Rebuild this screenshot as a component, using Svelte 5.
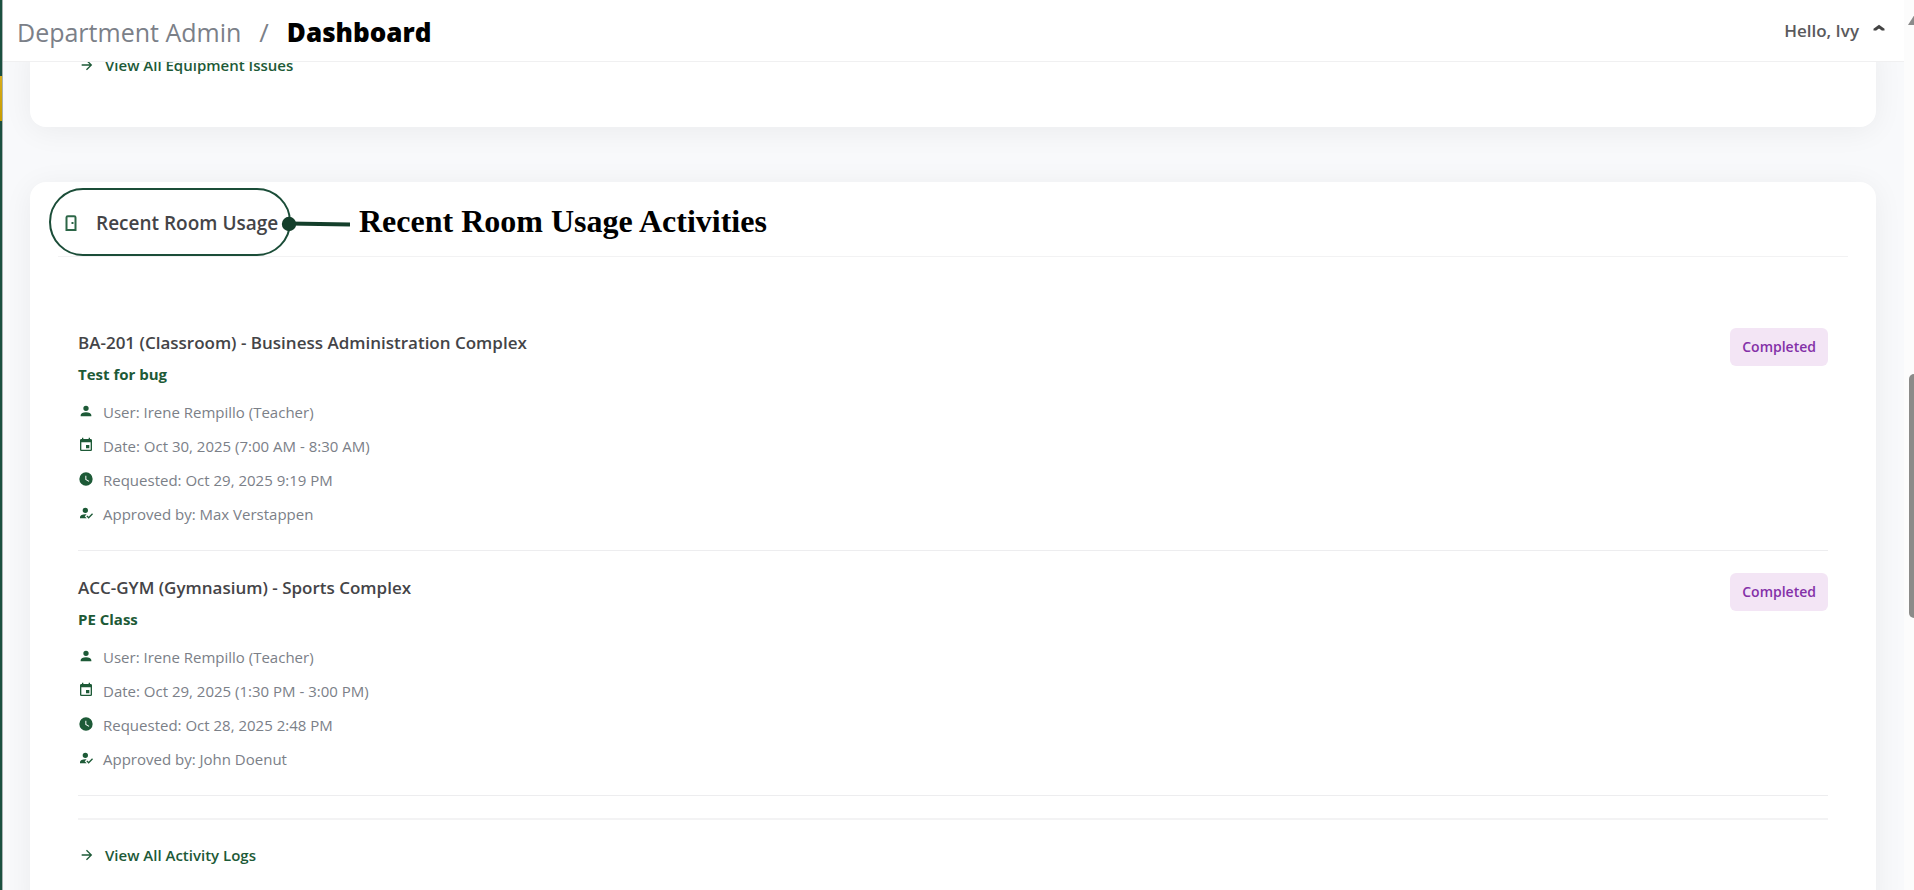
<script>
  const icons = {
    user: 'M12,4A4,4 0 0,1 16,8A4,4 0 0,1 12,12A4,4 0 0,1 8,8A4,4 0 0,1 12,4M12,14C16.42,14 20,15.79 20,18V20H4V18C4,15.79 7.58,14 12,14Z',
    date: 'M19,19H5V8H19M16,1V3H8V1H6V3H5C3.89,3 3,3.89 3,5V19A2,2 0 0,0 5,21H19A2,2 0 0,0 21,19V5C21,3.89 20.1,3 19,3H18V1M17,12H12V17H17V12Z',
    clock: 'M12,2A10,10 0 0,0 2,12A10,10 0 0,0 12,22A10,10 0 0,0 22,12A10,10 0 0,0 12,2M16.2,16.2L11,13V7H12.5V12.2L17,14.9L16.2,16.2Z',
    check: 'M21.1,12.5L22.5,13.91L15.97,20.5L12.5,17L13.9,15.59L15.97,17.67L21.1,12.5M10,17L13,20H3V18C3,15.79 6.58,14 11,14L12.89,14.11L10,17M11,4A4,4 0 0,1 15,8A4,4 0 0,1 11,12A4,4 0 0,1 7,8A4,4 0 0,1 11,4Z'
  };

  const activities = [
    {
      room: 'BA-201 (Classroom) - Business Administration Complex',
      purpose: 'Test for bug',
      status: 'Completed',
      details: [
        ['user', 'User: Irene Rempillo (Teacher)'],
        ['date', 'Date: Oct 30, 2025 (7:00 AM - 8:30 AM)'],
        ['clock', 'Requested: Oct 29, 2025 9:19 PM'],
        ['check', 'Approved by: Max Verstappen']
      ]
    },
    {
      room: 'ACC-GYM (Gymnasium) - Sports Complex',
      purpose: 'PE Class',
      status: 'Completed',
      details: [
        ['user', 'User: Irene Rempillo (Teacher)'],
        ['date', 'Date: Oct 29, 2025 (1:30 PM - 3:00 PM)'],
        ['clock', 'Requested: Oct 28, 2025 2:48 PM'],
        ['check', 'Approved by: John Doenut']
      ]
    }
  ];
</script>

{#snippet arrow()}
  <svg class="icon" viewBox="0 0 24 24" aria-hidden="true">
    <path d="M4,11V13H16L10.5,18.5L11.92,19.92L19.84,12L11.92,4.08L10.5,5.5L16,11H4Z" />
  </svg>
{/snippet}

<div class="shell">
  <aside class="sidebar"><span class="active"></span></aside>

  <div class="page">
    <header class="topbar">
      <nav class="crumbs" aria-label="Breadcrumb">
        <a href="#admin">Department Admin</a>
        <span class="slash">/</span>
        <strong>Dashboard</strong>
      </nav>
      <button class="account" type="button">
        Hello, Ivy
        <svg viewBox="0 0 12 8" aria-hidden="true"><path d="M2 6.5 L2 5.5 L6 2.5 L10 5.5 V6.5" /></svg>
      </button>
    </header>

    <main class="content">
      <section class="card issues">
        <a class="more" href="#issues">{@render arrow()}View All Equipment Issues</a>
      </section>

      <section class="card usage">
        <div class="card-head">
          <svg class="door" viewBox="0 0 12 16" aria-hidden="true">
            <path d="M1.5 15 V2.5 Q1.5 1.2 2.8 1.2 H9.2 Q10.5 1.2 10.5 2.5 V15 Z" />
            <path d="M6.5 8 H8.5" />
          </svg>
          <h2>Recent Room Usage</h2>
          <div class="callout">
            <span class="ring"></span>
            <svg class="leader" viewBox="0 0 70 16" aria-hidden="true">
              <path d="M8 7.5 L69 8.5" />
              <circle cx="8" cy="8" r="7.2" />
            </svg>
            <span class="label">Recent Room Usage Activities</span>
          </div>
        </div>

        <div class="card-body">
          {#each activities as item}
            <article class="item">
              <div>
                <h3>{item.room}</h3>
                <p class="purpose">{item.purpose}</p>
                <ul>
                  {#each item.details as [icon, text]}
                    <li>
                      <svg class="icon" viewBox="0 0 24 24" aria-hidden="true"><path d={icons[icon]} /></svg>
                      <span>{text}</span>
                    </li>
                  {/each}
                </ul>
              </div>
              <span class="badge">{item.status}</span>
            </article>
          {/each}
          <div class="footer">
            <a class="more" href="#logs">{@render arrow()}View All Activity Logs</a>
          </div>
        </div>
      </section>
    </main>
  </div>

  <div class="scroll" aria-hidden="true">
    <span class="up"></span>
    <span class="thumb"></span>
  </div>
</div>

<style>
  :global(body) {
    margin: 0;
    overflow: hidden;
  }

  .shell {
    display: flex;
    height: 100vh;
    overflow: hidden;
    background: #f8f9fb;
    color: #444447;
    font-family: 'Open Sans', 'Noto Sans', sans-serif;
  }

  h2, h3, p, ul {
    margin: 0;
    padding: 0;
  }

  .sidebar {
    flex: none;
    box-sizing: border-box;
    width: 3px;
    padding-top: 76px;
    background: #1b5040;
    border-right: 1px solid #a9b3b2;
  }

  .active {
    display: block;
    height: 45px;
    background: linear-gradient(#d9ad1c, #c79c00);
  }

  .page {
    flex: 1;
    min-width: 0;
  }

  .topbar {
    position: relative;
    z-index: 1;
    display: flex;
    align-items: center;
    justify-content: space-between;
    box-sizing: border-box;
    height: 62px;
    padding: 0 19px 0 14px;
    background: #fff;
    border-bottom: 1px solid #f0f0f1;
  }

  .crumbs {
    display: flex;
    align-items: center;
    font-size: 26px;
    line-height: 36px;
    padding-top: 2px;
  }

  .crumbs a {
    font-size: 25px;
    color: #7b8088;
    text-decoration: none;
  }

  .slash {
    margin: 0 18px;
    color: #7b8088;
  }

  .crumbs strong {
    font-weight: 800;
    color: #000;
  }

  .account {
    display: flex;
    align-items: center;
    gap: 14px;
    padding: 0;
    border: 0;
    background: none;
    color: #5a5a5d;
    font: 600 16px/24px 'Open Sans', 'Noto Sans', sans-serif;
    font-size: 17px;
  }

  .account svg {
    width: 12px;
    height: 8px;
    margin-bottom: 6px;
    fill: none;
    stroke: #444;
    stroke-width: 3;
  }

  .content {
    padding: 0 28px 0 27px;
  }

  .card {
    background: #fff;
    border-radius: 16px;
    box-shadow: 0 4px 30px rgba(0, 0, 0, 0.06);
  }

  .issues {
    display: flex;
    margin-top: -22px;
    padding: 10px 49px 47px;
  }

  .usage {
    margin-top: 55px;
    padding: 0 28px 48px;
  }

  .card-head {
    position: relative;
    display: flex;
    align-items: center;
    gap: 19px;
    height: 74px;
    padding: 0 7px;
    border-bottom: 1px solid #f2f2f3;
  }

  .door {
    width: 12px;
    height: 16px;
    margin-top: 8px;
    fill: none;
    stroke: #2c6647;
    stroke-width: 2;
  }

  h2 {
    padding-top: 8px;
    font-size: 19px;
    line-height: 26px;
    font-weight: 600;
  }

  .callout {
    position: absolute;
    inset: 5px auto auto -9px;
    display: flex;
    align-items: center;
    height: 70px;
  }

  .ring {
    box-sizing: border-box;
    width: 242px;
    height: 68px;
    border: 2px solid #1b4d38;
    border-radius: 35px;
  }

  .leader {
    width: 70px;
    height: 16px;
    margin: 3px 0 0 -10px;
    fill: #143f2b;
    stroke: #143f2b;
  }

  .leader path {
    stroke-width: 4;
  }

  .leader circle {
    stroke: none;
  }

  .label {
    margin-left: 8px;
    padding-bottom: 2px;
    font: bold 32px/36px 'Liberation Serif', serif;
    color: #000;
    white-space: nowrap;
  }

  .card-body {
    padding: 49px 20px 0;
  }

  .item {
    display: flex;
    align-items: flex-start;
    justify-content: space-between;
    padding: 22px 0 19px;
    border-bottom: 1px solid #ededef;
  }

  h3 {
    font-size: 17px;
    line-height: 30px;
    font-weight: 600;
  }

  .purpose {
    margin-bottom: 5px;
    font-size: 15px;
    line-height: 32px;
    font-weight: 700;
    color: #1d5a37;
  }

  ul {
    list-style: none;
  }

  li {
    display: flex;
    align-items: center;
    gap: 9px;
    height: 34px;
    font-size: 15px;
    line-height: 20px;
    color: #7b8088;
  }

  .icon {
    flex: none;
    width: 16px;
    height: 16px;
    fill: #1d5a37;
  }

  li .icon {
    margin-bottom: 2px;
  }

  .badge {
    padding: 9px 12px;
    border-radius: 6px;
    background: #f3e5f5;
    color: #8430a8;
    font-size: 14px;
    line-height: 20px;
    font-weight: 600;
  }

  .footer {
    display: flex;
    margin-top: 22px;
    padding: 20px 1px 0;
    border-top: 2px solid #f3f3f4;
  }

  .more {
    display: flex;
    align-items: center;
    gap: 10px;
    font-size: 15px;
    line-height: 30px;
    font-weight: 600;
    color: #1d5a37;
    text-decoration: none;
  }

  .scroll {
    position: relative;
    flex: none;
    width: 10px;
    background: #fcfcfc;
  }

  .up {
    position: absolute;
    top: 14px;
    left: 4px;
    width: 14px;
    height: 11px;
    background: #8b8b8b;
    clip-path: polygon(50% 0, 100% 100%, 0 100%);
  }

  .thumb {
    position: absolute;
    top: 42%;
    left: 5px;
    right: 0;
    height: 244px;
    border-radius: 7px 0 0 7px;
    background: #8b8b89;
  }
</style>
